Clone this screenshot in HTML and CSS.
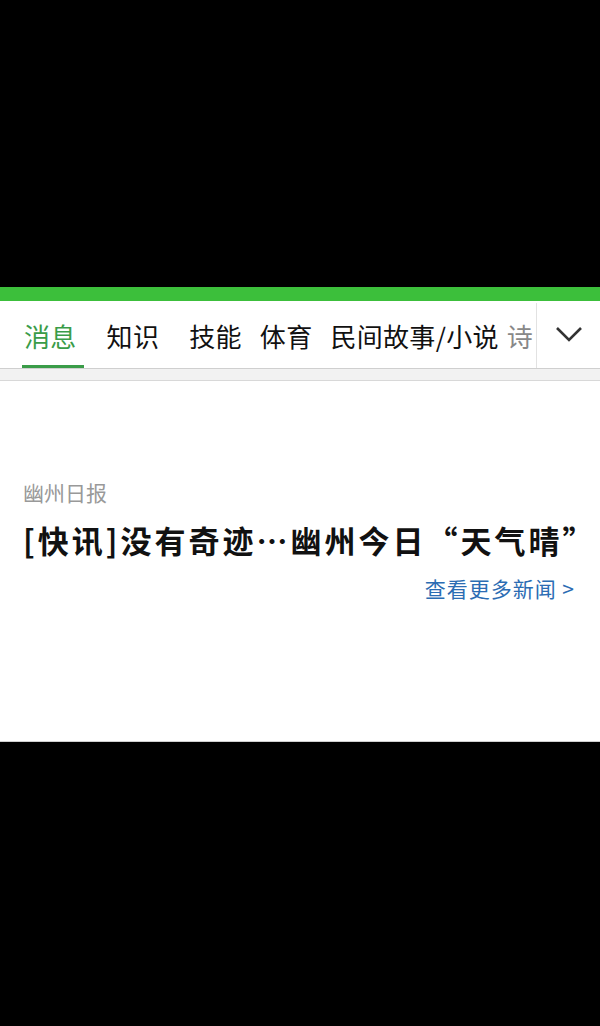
FILE: index.html
```html
<!DOCTYPE html>
<html lang="zh-CN">
<head>
<meta charset="utf-8">
<title>消息</title>
<link rel="stylesheet" href="styles.css">
</head>
<body>
<div class="top"></div>
<div class="green"></div>
<div class="tabbar">
  <div class="tabs">
    <span class="tab active">消息</span>
    <span class="tab t2">知识</span>
    <span class="tab t3">技能</span>
    <span class="tab t4">体育</span>
    <span class="tab t5">民间故事/小说</span>
    <span class="tab t6">诗</span>
  </div>
  <div class="more">
    <svg width="28" height="18" viewBox="0 0 28 18"><polyline points="2,3 14,15 26,3" fill="none" stroke="#333" stroke-width="2.6"/></svg>
  </div>
</div>
<div class="sep"></div>
<div class="content">
  <div class="source">幽州日报</div>
  <div class="headline">[快讯]没有奇迹…幽州今日<span class="q">“</span>天气晴<span class="q">”</span></div>
  <div class="link-row"><span class="link">查看更多新闻 &gt;</span></div>
</div>
<div class="bottom"></div>
</body>
</html>
```

FILE: styles.css
```css
html, body {
  margin: 0;
  padding: 0;
  background: #000;
  font-family: "Noto Sans CJK SC", "Noto Sans", sans-serif;
}
.top {
  height: 287px;
  background: #000;
}
.green {
  height: 14px;
  background: #3cbf3b;
}
.tabbar {
  height: 67px;
  background: #fff;
  display: flex;
  border-bottom: 1px solid #cfcfcf;
}
.tabs {
  width: 536px;
  display: flex;
  overflow: hidden;
  padding-left: 24px;
  box-sizing: border-box;
  white-space: nowrap;
}
.tab {
  position: relative;
  font-size: 26px;
  padding-top: 3px;
  box-sizing: border-box;
  height: 67px;
  line-height: 64px;
  color: #111;
  flex: none;
  letter-spacing: 0.3px;
}
.tab.active {
  color: #3a9c48;
  margin-right: 30px;
}
.tab.active::after {
  content: "";
  position: absolute;
  left: -2px;
  right: -7px;
  bottom: 0;
  height: 3px;
  background: #3a9c48;
}
.t2 { margin-right: 30px; }
.t3 { margin-right: 18px; }
.t4 { margin-right: 18px; }
.t5 { margin-right: 8px; }
.t6 { color: #888; }
.more {
  flex: 1;
  border-left: 1px solid #e2e2e2;
  margin-top: 2px;
  display: flex;
  align-items: center;
  justify-content: center;
  padding-bottom: 4px;
}
.sep {
  height: 11px;
  background: #f2f2f2;
  border-bottom: 1px solid #d8d8d8;
}
.content {
  background: #fff;
  height: 361px;
  padding: 98px 20px 0 23px;
  box-sizing: border-box;
  border-bottom: 1px solid #cfcfcf;
}
.source {
  font-size: 21px;
  line-height: 26px;
  color: #999;
}
.headline {
  margin-top: 14px;
  font-size: 31px;
  line-height: 42px;
  font-weight: 700;
  color: #111;
  white-space: nowrap;
  letter-spacing: 3px;
}
.q {
  font-feature-settings: "fwid";
}
.link-row {
  display: flex;
  justify-content: flex-end;
  margin-top: 13px;
}
.link {
  font-size: 21px;
  line-height: 28px;
  color: #2b6cb3;
  margin-right: 5px;
  letter-spacing: 1px;
}
.bottom {
  height: 285px;
  background: #000;
}
```
